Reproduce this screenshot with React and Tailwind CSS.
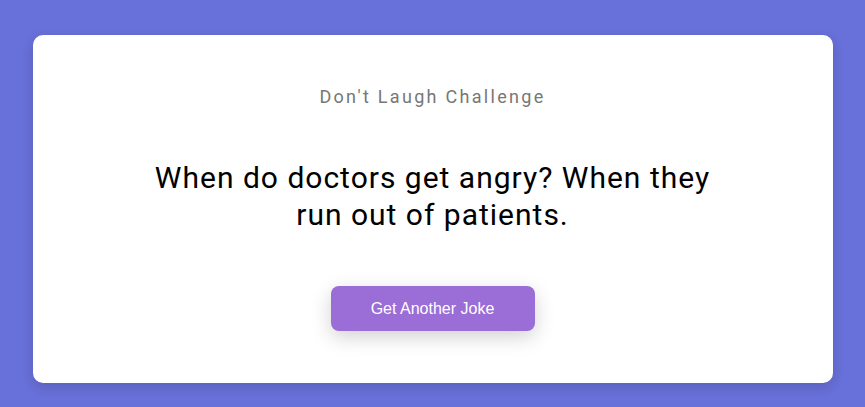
import React from 'react';

export default function App() {
  return (
    <div className="min-h-screen w-full bg-[#6870d9] pt-[35px] pb-6 flex justify-center">
      <div className="w-[800px] h-[348px] bg-white rounded-[10px] shadow-[0_4px_12px_rgba(0,0,0,0.15)] px-[50px] py-[50px] flex flex-col items-center text-center font-['Roboto',sans-serif]">
        <h3 className="text-[18px] leading-6 tracking-[2.3px] text-[#777]">
          Don&apos;t Laugh Challenge
        </h3>
        <div className="mt-[50px] max-w-[575px] text-[30px] leading-[37px] tracking-[1px] text-black">
          When do doctors get angry? When they run out of patients.
        </div>
        <button className="mt-[53px] w-[204px] h-[45px] rounded-[8px] bg-[#9a6dd7] text-white text-[16px] font-['Liberation_Sans',Arial,sans-serif] shadow-[0_6px_20px_rgba(0,0,0,0.18)]">
          Get Another Joke
        </button>
      </div>
    </div>
  );
}
